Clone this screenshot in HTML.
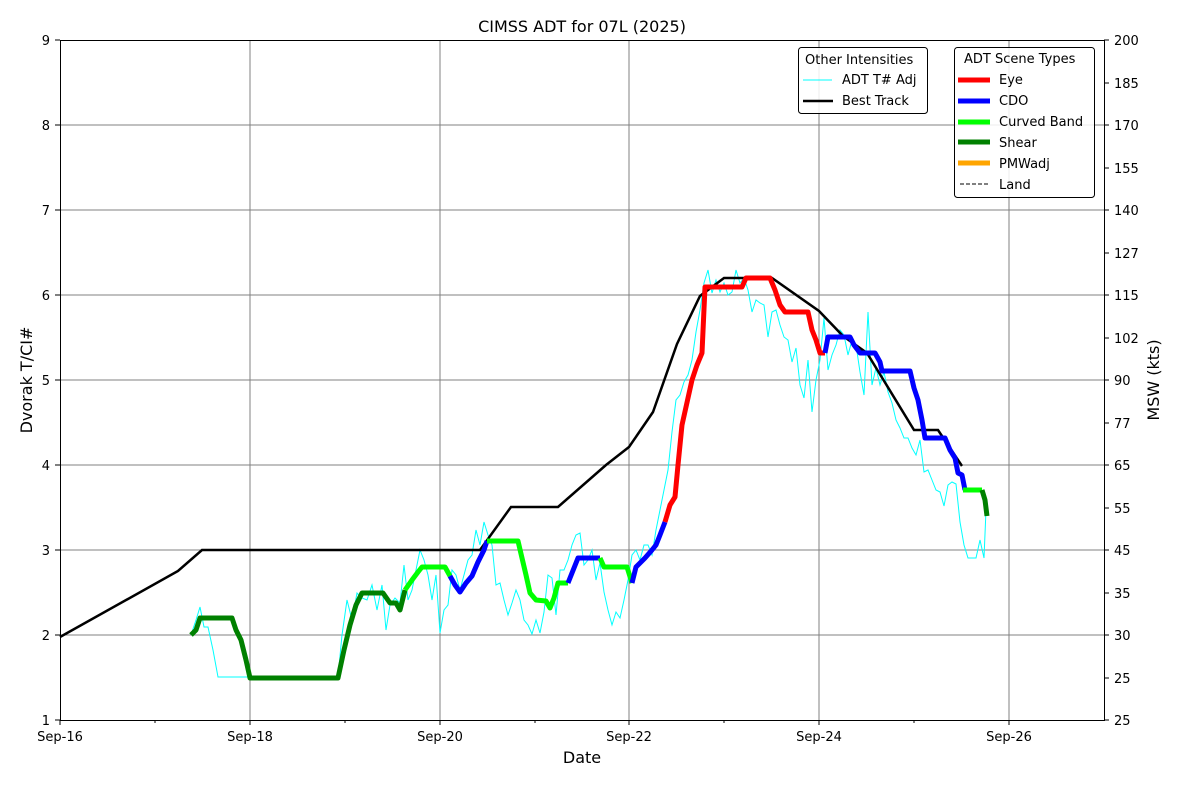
<!DOCTYPE html><html><head><meta charset="utf-8"><style>body{margin:0;background:#fff}svg{display:block;font-family:"DejaVu Sans",sans-serif}</style></head><body>
<svg width="1200" height="800" viewBox="0 0 1200 800">
<rect width="1200" height="800" fill="#fff"/>
<g stroke="#808080" stroke-width="1">
<line x1="250" y1="40" x2="250" y2="720"/><line x1="440" y1="40" x2="440" y2="720"/><line x1="629" y1="40" x2="629" y2="720"/><line x1="819" y1="40" x2="819" y2="720"/><line x1="1009" y1="40" x2="1009" y2="720"/>
<line x1="60" y1="125" x2="1104" y2="125"/><line x1="60" y1="210" x2="1104" y2="210"/><line x1="60" y1="295" x2="1104" y2="295"/><line x1="60" y1="380" x2="1104" y2="380"/><line x1="60" y1="465" x2="1104" y2="465"/><line x1="60" y1="550" x2="1104" y2="550"/><line x1="60" y1="635" x2="1104" y2="635"/>
</g>
<polyline fill="none" stroke="#00ffff" stroke-width="1" points="191,635 196,620 200,607 204,627 208,627 213,650 218,677 250,677 338,677 342,635 347,600 352,620 357,593 362,598 367,600 372,585 377,610 382,585 386,630 390,605 395,598 400,603 404,565 408,600 412,590 416,570 420,550 424,560 428,575 432,600 436,575 440,633 444,610 448,605 452,570 456,575 460,590 464,575 468,560 472,555 476,530 480,545 484,522 488,535 492,545 496,585 500,583 504,600 508,615 512,603 516,590 520,600 524,620 528,625 532,634 536,620 540,633 544,612 548,575 552,578 556,615 560,570 564,570 568,560 572,545 576,535 580,533 584,565 588,560 592,550 596,580 600,563 604,592 608,610 612,625 616,612 620,618 624,600 628,580 632,555 636,550 640,560 644,545 648,545 652,555 656,530 660,510 664,490 668,470 672,432 676,400 680,395 684,382 688,375 692,360 696,332 700,310 704,283 708,270 712,293 716,280 720,292 724,283 728,295 732,292 736,270 740,283 744,278 748,290 752,312 756,300 760,303 764,305 768,337 772,312 776,310 780,325 784,337 788,340 792,362 796,348 800,385 804,398 808,360 812,412 816,380 820,360 824,318 828,370 832,355 836,345 840,330 844,335 848,355 852,340 856,345 860,372 864,395 868,312 872,385 876,368 880,385 884,372 888,392 892,403 896,420 900,428 904,438 908,438 912,448 916,455 920,440 924,472 928,470 932,480 936,490 940,492 944,506 948,485 952,482 956,484 960,522 964,545 968,558 976,558 980,540 984,558 986,510"/>
<polyline fill="none" stroke="#000" stroke-width="2.5" points="60,637 178,571 202,550 480,550 511,507 558,507 606,465 629,447 653,412 677,344 700,296 724,278 772,278 819,311 843,336 867,353 914,430 938,430 962,466"/>
<g fill="none" stroke-width="5" stroke-linejoin="round">
<polyline stroke="#008000" points="191,635 196,630 200,618 232,618 236,630 241,640 246,660 250,678 338,678 344,650 350,625 356,605 362,593 383,593 390,603 396,603 400,610 405,590"/>
<polyline stroke="#00ff00" points="405,590 412,580 418,572 422,567 445,567 450,576"/>
<polyline stroke="#0000ff" points="450,576 455,585 460,592 466,583 472,576 478,562 484,550 487,541"/>
<polyline stroke="#00ff00" points="487,541 518,541 522,558 526,575 530,593 536,600 546,601 550,608 554,598 558,583 568,583"/>
<polyline stroke="#0000ff" points="568,583 572,573 578,558 600,558"/>
<polyline stroke="#00ff00" points="600,558 604,567 627,567 632,583"/>
<polyline stroke="#0000ff" points="632,583 636,567 645,558 652,550 656,545 660,535 665,522"/>
<polyline stroke="#ff0000" points="665,522 670,505 675,497 678,465 682,425 688,398 692,380 697,365 702,353 705,287 742,287 746,278 770,278 775,290 780,305 785,312 808,312 812,330 816,340 820,353 825,353"/>
<polyline stroke="#0000ff" points="825,353 828,337 850,337 854,345 860,353 875,353 880,362 882,371 910,371 914,388 918,400 922,420 925,438 945,438 950,450 955,458 958,473 962,475 965,490"/>
<polyline stroke="#00ff00" points="963,490 982,490"/>
<polyline stroke="#008000" points="982,490 985,500 987,516"/>
</g>
<rect x="60.5" y="40.5" width="1044" height="680" fill="none" stroke="#000" stroke-width="1"/>
<g stroke="#000" stroke-width="1">
<path d="M60 720v5M250 720v5M440 720v5M629 720v5M819 720v5M1009 720v5M155 720v3M345 720v3M535 720v3M724 720v3M914 720v3M60 40h-5M60 125h-5M60 210h-5M60 295h-5M60 380h-5M60 465h-5M60 550h-5M60 635h-5M60 720h-5"/>
<path d="M1104 40h5M1104 83h5M1104 125h5M1104 168h5M1104 210h5M1104 253h5M1104 295h5M1104 338h5M1104 380h5M1104 423h5M1104 465h5M1104 508h5M1104 550h5M1104 593h5M1104 635h5M1104 678h5M1104 720h5"/>
</g>
<g font-size="13" fill="#000">
<g text-anchor="end"><text x="50" y="45">9</text><text x="50" y="130">8</text><text x="50" y="215">7</text><text x="50" y="300">6</text><text x="50" y="385">5</text><text x="50" y="470">4</text><text x="50" y="555">3</text><text x="50" y="640">2</text><text x="50" y="725">1</text></g>
<g><text x="1114" y="45">200</text><text x="1114" y="88">185</text><text x="1114" y="130">170</text><text x="1114" y="173">155</text><text x="1114" y="215">140</text><text x="1114" y="258">127</text><text x="1114" y="300">115</text><text x="1114" y="343">102</text><text x="1114" y="385">90</text><text x="1114" y="428">77</text><text x="1114" y="470">65</text><text x="1114" y="513">55</text><text x="1114" y="555">45</text><text x="1114" y="598">35</text><text x="1114" y="640">30</text><text x="1114" y="683">25</text><text x="1114" y="725">25</text></g>
<g text-anchor="middle"><text x="60" y="741">Sep-16</text><text x="250" y="741">Sep-18</text><text x="440" y="741">Sep-20</text><text x="629" y="741">Sep-22</text><text x="819" y="741">Sep-24</text><text x="1009" y="741">Sep-26</text></g>
</g>
<text x="582" y="32" font-size="16" text-anchor="middle">CIMSS ADT for 07L (2025)</text>
<text x="582" y="763" font-size="16" text-anchor="middle">Date</text>
<text transform="translate(32,380) rotate(-90)" font-size="16" text-anchor="middle">Dvorak T/CI#</text>
<text transform="translate(1159,380) rotate(-90)" font-size="16" text-anchor="middle">MSW (kts)</text>
<g font-size="13">
<rect x="798.5" y="47.5" width="129" height="66" rx="3" fill="#fff" fill-opacity="0.85" stroke="#000"/>
<text x="805" y="64">Other Intensities</text>
<line x1="803" y1="80" x2="832" y2="80" stroke="#00ffff" stroke-width="1"/><text x="842" y="84">ADT T# Adj</text>
<line x1="803" y1="101" x2="833" y2="101" stroke="#000" stroke-width="2.5"/><text x="842" y="105">Best Track</text>
<rect x="954.5" y="47.5" width="140" height="150" rx="3" fill="#fff" fill-opacity="0.85" stroke="#000"/>
<text x="964" y="63">ADT Scene Types</text>
<line x1="958" y1="80" x2="990" y2="80" stroke="#ff0000" stroke-width="5"/><text x="999" y="84">Eye</text>
<line x1="958" y1="101" x2="990" y2="101" stroke="#0000ff" stroke-width="5"/><text x="999" y="105">CDO</text>
<line x1="958" y1="122" x2="990" y2="122" stroke="#00ff00" stroke-width="5"/><text x="999" y="126">Curved Band</text>
<line x1="958" y1="142" x2="990" y2="142" stroke="#008000" stroke-width="5"/><text x="999" y="147">Shear</text>
<line x1="958" y1="163" x2="990" y2="163" stroke="#ffa500" stroke-width="5"/><text x="999" y="168">PMWadj</text>
<line x1="960" y1="184" x2="988" y2="184" stroke="#000" stroke-width="1" stroke-dasharray="4,2"/><text x="999" y="189">Land</text>
</g>
</svg></body></html>
